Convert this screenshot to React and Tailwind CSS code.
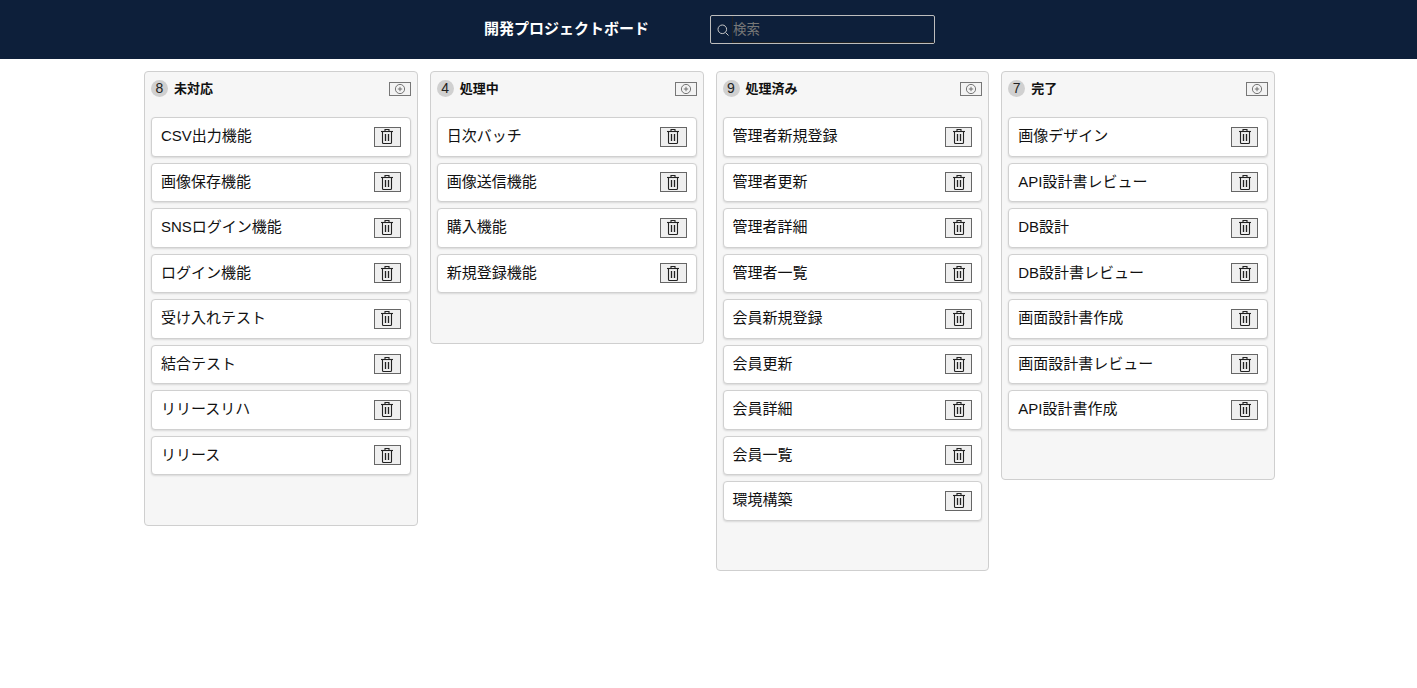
const FONT = '"Liberation Sans", "Noto Sans CJK JP", sans-serif';

const columns = [
  {
    name: "未対応",
    tasks: ["CSV出力機能", "画像保存機能", "SNSログイン機能", "ログイン機能", "受け入れテスト", "結合テスト", "リリースリハ", "リリース"],
  },
  {
    name: "処理中",
    tasks: ["日次バッチ", "画像送信機能", "購入機能", "新規登録機能"],
  },
  {
    name: "処理済み",
    tasks: ["管理者新規登録", "管理者更新", "管理者詳細", "管理者一覧", "会員新規登録", "会員更新", "会員詳細", "会員一覧", "環境構築"],
  },
  {
    name: "完了",
    tasks: ["画像デザイン", "API設計書レビュー", "DB設計", "DB設計書レビュー", "画面設計書作成", "画面設計書レビュー", "API設計書作成"],
  },
];

function TrashIcon() {
  return (
    <svg width="16" height="17" viewBox="0 0 16 17" fill="none" stroke="#222" strokeWidth="1.100">
      <path d="M2 3.500h12" />
      <path d="M6 3.500V1.500h4v2" />
      <path d="M3.500 3.500v11a1 1 0 0 0 1 1h7a1 1 0 0 0 1-1v-11" />
      <path d="M6.500 6v7M9.500 6v7" strokeWidth="1.300" />
    </svg>
  );
}

function AddIcon() {
  return (
    <svg width="12" height="12" viewBox="0 0 12 12" fill="none" stroke="#555" strokeWidth="0.8">
      <circle cx="6" cy="6" r="4.600" />
      <path d="M6 3.800v4.400M3.800 6h4.400" />
    </svg>
  );
}

function SearchIcon() {
  return (
    <svg width="14" height="14" viewBox="0 0 14 14" fill="none" stroke="#c8c8c8" strokeWidth="1">
      <circle cx="6.300" cy="6.300" r="4.300" />
      <path d="M9.500 9.500l3 3" />
    </svg>
  );
}

function TaskCard({ title }) {
  return (
    <div className="flex h-[39.5px] items-center justify-between rounded border border-[#d0d0d0] bg-white px-[9px] shadow-[0_1px_2px_rgba(0,0,0,0.12)]">
      <span className="-mt-px text-[15px] text-[#111]">{title}</span>
      <button className="flex h-[20px] w-[27px] items-center justify-center border border-[#666] bg-[#efefef]">
        <TrashIcon />
      </button>
    </div>
  );
}

function Column({ name, tasks }) {
  return (
    <div className="rounded border border-[#cfcfcf] bg-[#f6f6f6] px-[6px] pb-[49.5px]">
      <div className="flex h-[45px] items-start justify-between pt-[7px]">
        <div className="flex items-center gap-[6px]">
          <span className="flex h-[17px] w-[17px] items-center justify-center rounded-full bg-[#d0d0d0] text-[14px] text-[#222]">
            {tasks.length}
          </span>
          <span className="text-[13px] font-bold text-[#111]">{name}</span>
        </div>
        <button className="mt-[3px] flex h-[14px] w-[22px] items-center justify-center border border-[#777] bg-[#f3f3f3]">
          <AddIcon />
        </button>
      </div>
      <div className="flex flex-col gap-[6px]">
        {tasks.map((task) => (
          <TaskCard key={task} title={task} />
        ))}
      </div>
    </div>
  );
}

export default function App() {
  return (
    <div className="min-h-screen bg-white" style={{ fontFamily: FONT }}>
      <header className="flex h-[59px] items-center bg-[#0d1f3a] pl-[484px]">
        <h1 className="w-[226px] text-[15px] font-bold text-white">開発プロジェクトボード</h1>
        <div className="flex h-[29px] w-[225px] items-center rounded-[2px] border border-[#bdbdbd]">
          <span className="flex w-[21px] shrink-0 items-center justify-center pl-[3px]">
            <SearchIcon />
          </span>
          <input
            placeholder="検索"
            className="h-full w-full border-b border-l border-[#222] bg-transparent text-[13.5px] text-white outline-none placeholder:text-[#777]"
          />
        </div>
      </header>
      <main className="ml-[144px] mt-3 grid w-[1131px] grid-cols-4 items-start gap-3">
        {columns.map((col) => (
          <Column key={col.name} name={col.name} tasks={col.tasks} />
        ))}
      </main>
    </div>
  );
}
